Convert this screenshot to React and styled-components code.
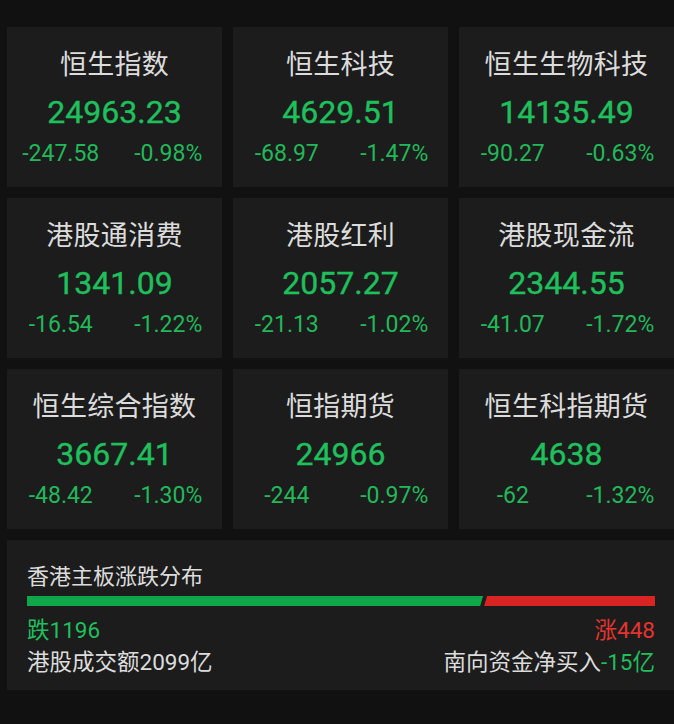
import React from 'react'
import styled, { createGlobalStyle } from 'styled-components'

const GREEN = '#1fbf5c'
const RED = '#e5342f'

const GlobalStyle = createGlobalStyle`
  html, body {
    margin: 0;
    padding: 0;
    background: #111111;
  }
  body {
    font-family: Roboto, "Noto Sans CJK SC", sans-serif;
  }
`

const indices = [
  { name: '恒生指数', value: '24963.23', change: '-247.58', pct: '-0.98%' },
  { name: '恒生科技', value: '4629.51', change: '-68.97', pct: '-1.47%' },
  { name: '恒生生物科技', value: '14135.49', change: '-90.27', pct: '-0.63%' },
  { name: '港股通消费', value: '1341.09', change: '-16.54', pct: '-1.22%' },
  { name: '港股红利', value: '2057.27', change: '-21.13', pct: '-1.02%' },
  { name: '港股现金流', value: '2344.55', change: '-41.07', pct: '-1.72%' },
  { name: '恒生综合指数', value: '3667.41', change: '-48.42', pct: '-1.30%' },
  { name: '恒指期货', value: '24966', change: '-244', pct: '-0.97%' },
  { name: '恒生科指期货', value: '4638', change: '-62', pct: '-1.32%' },
]

const App = () => {
  const down = 1196
  const up = 448
  const downShare = (down / (down + up)) * 100

  return (
    <Page>
      <GlobalStyle />
      <Grid>
        {indices.map((item) => (
          <Card key={item.name}>
            <Title>{item.name}</Title>
            <Value>{item.value}</Value>
            <Changes>
              <Change>{item.change}</Change>
              <Change>{item.pct}</Change>
            </Changes>
          </Card>
        ))}
      </Grid>
      <Panel>
        <PanelTitle>香港主板涨跌分布</PanelTitle>
        <Bar>
          <BarPart $color="#10a64a" $side="left" style={{ width: `${downShare}%` }} />
          <BarPart $color="#d92424" $side="right" style={{ width: `${100 - downShare}%` }} />
        </Bar>
        <InfoRow $gap={9}>
          <Colored $color={GREEN}>跌{down}</Colored>
          <Colored $color={RED}>涨{up}</Colored>
        </InfoRow>
        <InfoRow $gap={2}>
          <span>港股成交额2099亿</span>
          <span>
            南向资金净买入<Colored $color={GREEN}>-15亿</Colored>
          </span>
        </InfoRow>
      </Panel>
    </Page>
  )
}

const Page = styled.div`
  width: 674px;
  height: 724px;
  overflow: hidden;
  padding: 27px 0 0 7px;
  box-sizing: border-box;
  background: #111111;
`

const Grid = styled.div`
  display: grid;
  grid-template-columns: repeat(3, 215px);
  grid-auto-rows: 160px;
  column-gap: 11px;
  row-gap: 11px;
`

const Card = styled.div`
  background: #1c1c1c;
  display: flex;
  flex-direction: column;
  align-items: center;
  padding-top: 20px;
  box-sizing: border-box;
`

const Title = styled.div`
  font-family: "Noto Sans CJK SC", sans-serif;
  font-size: 27px;
  line-height: 32px;
  color: #dcdcdc;
  letter-spacing: 0.3px;
`

const Value = styled.div`
  margin-top: 15px;
  font-size: 32px;
  line-height: 36px;
  font-weight: 400;
  color: ${GREEN};
  -webkit-text-stroke: 0.4px ${GREEN};
`

const Changes = styled.div`
  margin-top: 10px;
  width: 100%;
  display: grid;
  grid-template-columns: 1fr 1fr;
`

const Change = styled.div`
  text-align: center;
  font-size: 23px;
  line-height: 28px;
  color: #22b85a;
`

const Panel = styled.div`
  margin-top: 11px;
  height: 150px;
  background: #1c1c1c;
  padding: 19px 19px 0 20px;
  box-sizing: border-box;
  color: #dcdcdc;
  font-family: Roboto, "Noto Sans CJK SC", sans-serif;
`

const PanelTitle = styled.div`
  font-family: "Noto Sans CJK SC", sans-serif;
  font-size: 22px;
  line-height: 30px;
`

const Bar = styled.div`
  margin-top: 7px;
  height: 10px;
  display: flex;
`

const BarPart = styled.div`
  height: 100%;
  background: ${(p) => p.$color};
  clip-path: ${(p) =>
    p.$side === 'left'
      ? 'polygon(0 0, 100% 0, calc(100% - 3px) 100%, 0 100%)'
      : 'polygon(3px 0, 100% 0, 100% 100%, 0 100%)'};
  margin-left: ${(p) => (p.$side === 'right' ? '1px' : '0')};
`

const InfoRow = styled.div`
  display: flex;
  justify-content: space-between;
  font-size: 22.5px;
  line-height: 30px;
  margin-top: ${(p) => p.$gap}px;
`

const Colored = styled.span`
  color: ${(p) => p.$color};
`

export default App
